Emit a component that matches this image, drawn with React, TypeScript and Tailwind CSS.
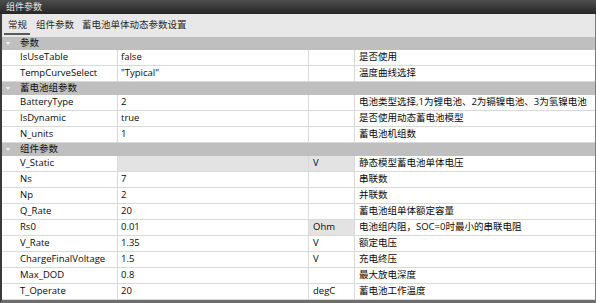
import React from "react";

type Row =
  | { kind: "header"; label: string }
  | { kind: "row"; name: string; value: string; unit?: string; desc: string; grayValue?: boolean; grayUnit?: boolean };

const rows: Row[] = [
  { kind: "header", label: "参数" },
  { kind: "row", name: "IsUseTable", value: "false", desc: "是否使用" },
  { kind: "row", name: "TempCurveSelect", value: "\"Typical\"", desc: "温度曲线选择" },
  { kind: "header", label: "蓄电池组参数" },
  { kind: "row", name: "BatteryType", value: "2", desc: "电池类型选择,1为锂电池、2为镉镍电池、3为氢镍电池" },
  { kind: "row", name: "IsDynamic", value: "true", desc: "是否使用动态蓄电池模型" },
  { kind: "row", name: "N_units", value: "1", desc: "蓄电池机组数" },
  { kind: "header", label: "组件参数" },
  { kind: "row", name: "V_Static", value: "", unit: "V", desc: "静态模型蓄电池单体电压", grayValue: true, grayUnit: true },
  { kind: "row", name: "Ns", value: "7", desc: "串联数" },
  { kind: "row", name: "Np", value: "2", desc: "并联数" },
  { kind: "row", name: "Q_Rate", value: "20", desc: "蓄电池组单体额定容量" },
  { kind: "row", name: "Rs0", value: "0.01", unit: "Ohm", desc: "电池组内阻，SOC=0时最小的串联电阻", grayUnit: true },
  { kind: "row", name: "V_Rate", value: "1.35", unit: "V", desc: "额定电压" },
  { kind: "row", name: "ChargeFinalVoltage", value: "1.5", unit: "V", desc: "充电终压" },
  { kind: "row", name: "Max_DOD", value: "0.8", desc: "最大放电深度" },
  { kind: "row", name: "T_Operate", value: "20", unit: "degC", desc: "蓄电池工作温度" },
];

const font = { fontFamily: '"Open Sans", "Noto Sans CJK SC", sans-serif' };

export default function App() {
  return (
    <div className="w-[596px] h-[303px] flex flex-col overflow-hidden bg-white text-[9.5px] text-[#0a0a0a]" style={font}>
      <div className="h-[14px] shrink-0 bg-gradient-to-b from-[#4e4e4e] to-[#262626] flex items-center pl-[6px] text-[9px] text-[#e4e4e4]">
        组件参数
      </div>
      <div className="flex-1 flex flex-col border-l-2 border-l-[#3a3a3a] border-r border-r-[#7a7a7a] border-b-[3px] border-b-[#6e6e6e]">
        <div className="h-[23px] shrink-0 bg-[#e8e8e8] flex items-stretch pl-[2px] text-[#2a2a2a]">
          <div className="relative px-[4px] flex items-center">
            常规
            <div className="absolute left-[0px] right-[1px] bottom-[2px] h-[2px] bg-[#5a5a5a]" />
          </div>
          <div className="px-[5px] flex items-center">组件参数</div>
          <div className="px-[3px] flex items-center">蓄电池单体动态参数设置</div>
        </div>
        <div className="flex-1 flex flex-col">
          {rows.map((r, i) =>
            r.kind === "header" ? (
              <div key={i} className="h-[13px] shrink-0 bg-[#bfbfbf] flex items-center">
                <svg width="18" height="13" viewBox="0 0 18 13" className="shrink-0">
                  <path d="M3.5 5 L8.5 5 L6 8 Z" fill="#ededed" />
                </svg>
                <span className="text-[#111]">{r.label}</span>
              </div>
            ) : (
              <div key={i} className="h-[16px] shrink-0 flex border-b border-[#d9d9d9]">
                <div className="w-[115px] shrink-0 pl-[18px] flex items-center">{r.name}</div>
                <div className={`w-[191px] shrink-0 border-l border-[#d9d9d9] pl-[3px] flex items-center ${r.grayValue ? "bg-[#e3e3e3]" : ""}`}>
                  {r.value}
                </div>
                <div className={`w-[46px] shrink-0 border-l border-[#d9d9d9] pl-[4px] flex items-center ${r.grayUnit ? "bg-[#e3e3e3]" : ""}`}>
                  {r.unit ?? ""}
                </div>
                <div className="flex-1 border-l border-[#d9d9d9] pl-[4px] flex items-center whitespace-nowrap overflow-hidden">
                  {r.desc}
                </div>
              </div>
            )
          )}
        </div>
      </div>
    </div>
  );
}
